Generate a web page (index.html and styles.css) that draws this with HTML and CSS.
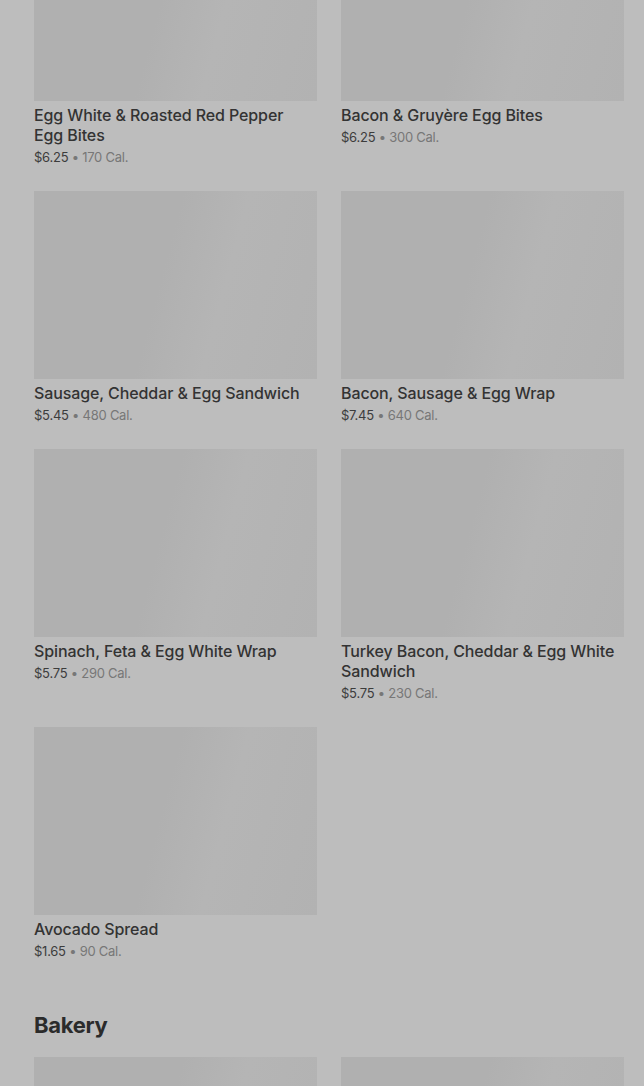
FILE: index.html
```html
<!DOCTYPE html>
<html lang="en">

<head>
  <meta charset="UTF-8" />
  <meta name="viewport" content="width=device-width, initial-scale=1.0" />
  <title>Menu</title>
  <link rel="stylesheet" href="styles.css">
</head>

<body>

  <main class="menu">
    <section class="category">
      <div class="grid">
        <div class="item">
          <div class="thumb"></div>
          <div class="name">Egg White &amp; Roasted Red Pepper Egg Bites</div>
          <div class="meta"><span class="price">$6.25</span> • 170 Cal.</div>
        </div>
        <div class="item">
          <div class="thumb"></div>
          <div class="name">Bacon &amp; Gruyère Egg Bites</div>
          <div class="meta"><span class="price">$6.25</span> • 300 Cal.</div>
        </div>
        <div class="item">
          <div class="thumb"></div>
          <div class="name">Sausage, Cheddar &amp; Egg Sandwich</div>
          <div class="meta"><span class="price">$5.45</span> • 480 Cal.</div>
        </div>
        <div class="item">
          <div class="thumb"></div>
          <div class="name">Bacon, Sausage &amp; Egg Wrap</div>
          <div class="meta"><span class="price">$7.45</span> • 640 Cal.</div>
        </div>
        <div class="item">
          <div class="thumb"></div>
          <div class="name">Spinach, Feta &amp; Egg White Wrap</div>
          <div class="meta"><span class="price">$5.75</span> • 290 Cal.</div>
        </div>
        <div class="item">
          <div class="thumb"></div>
          <div class="name">Turkey Bacon, Cheddar &amp; Egg White Sandwich</div>
          <div class="meta"><span class="price">$5.75</span> • 230 Cal.</div>
        </div>
        <div class="item">
          <div class="thumb"></div>
          <div class="name">Avocado Spread</div>
          <div class="meta"><span class="price">$1.65</span> • 90 Cal.</div>
        </div>
      </div>
    </section>

    <section class="category">
      <h2>Bakery</h2>
      <div class="grid">
        <div class="item">
          <div class="thumb"></div>
        </div>
        <div class="item">
          <div class="thumb"></div>
        </div>
      </div>
    </section>
  </main>

</body>

</html>
```

FILE: styles.css
```css
body {
  font-family: Inter, "Noto Sans", sans-serif;
  margin: 0;
  padding: 0;
  background-color: #bdbdbd;
  color: #333;
}

.menu {
  margin-top: -87px;
  padding: 0 20px 0 34px;
}

.grid {
  display: grid;
  grid-template-columns: 1fr 1fr;
  column-gap: 24px;
  row-gap: 24px;
}

.thumb {
  height: 188px;
  background: linear-gradient(105deg, #b0b0b0 0%, #b0b0b0 45%, #b5b5b5 65%, #b2b2b2 100%);
}

.name {
  margin-top: 4px;
  padding-right: 8px;
  font-size: 16px;
  line-height: 20px;
  font-weight: 500;
  letter-spacing: -0.1px;
  color: #333;
}

.meta {
  margin-top: 2px;
  font-size: 13px;
  line-height: 20px;
  letter-spacing: -0.25px;
  color: #777;
}

.price {
  color: #3c3c3c;
}

.category + .category {
  margin-top: 50px;
}

h2 {
  margin: 0 0 18px;
  font-size: 22px;
  line-height: 28px;
  font-weight: 700;
  letter-spacing: -0.3px;
  color: #2b2b2b;
}
```
